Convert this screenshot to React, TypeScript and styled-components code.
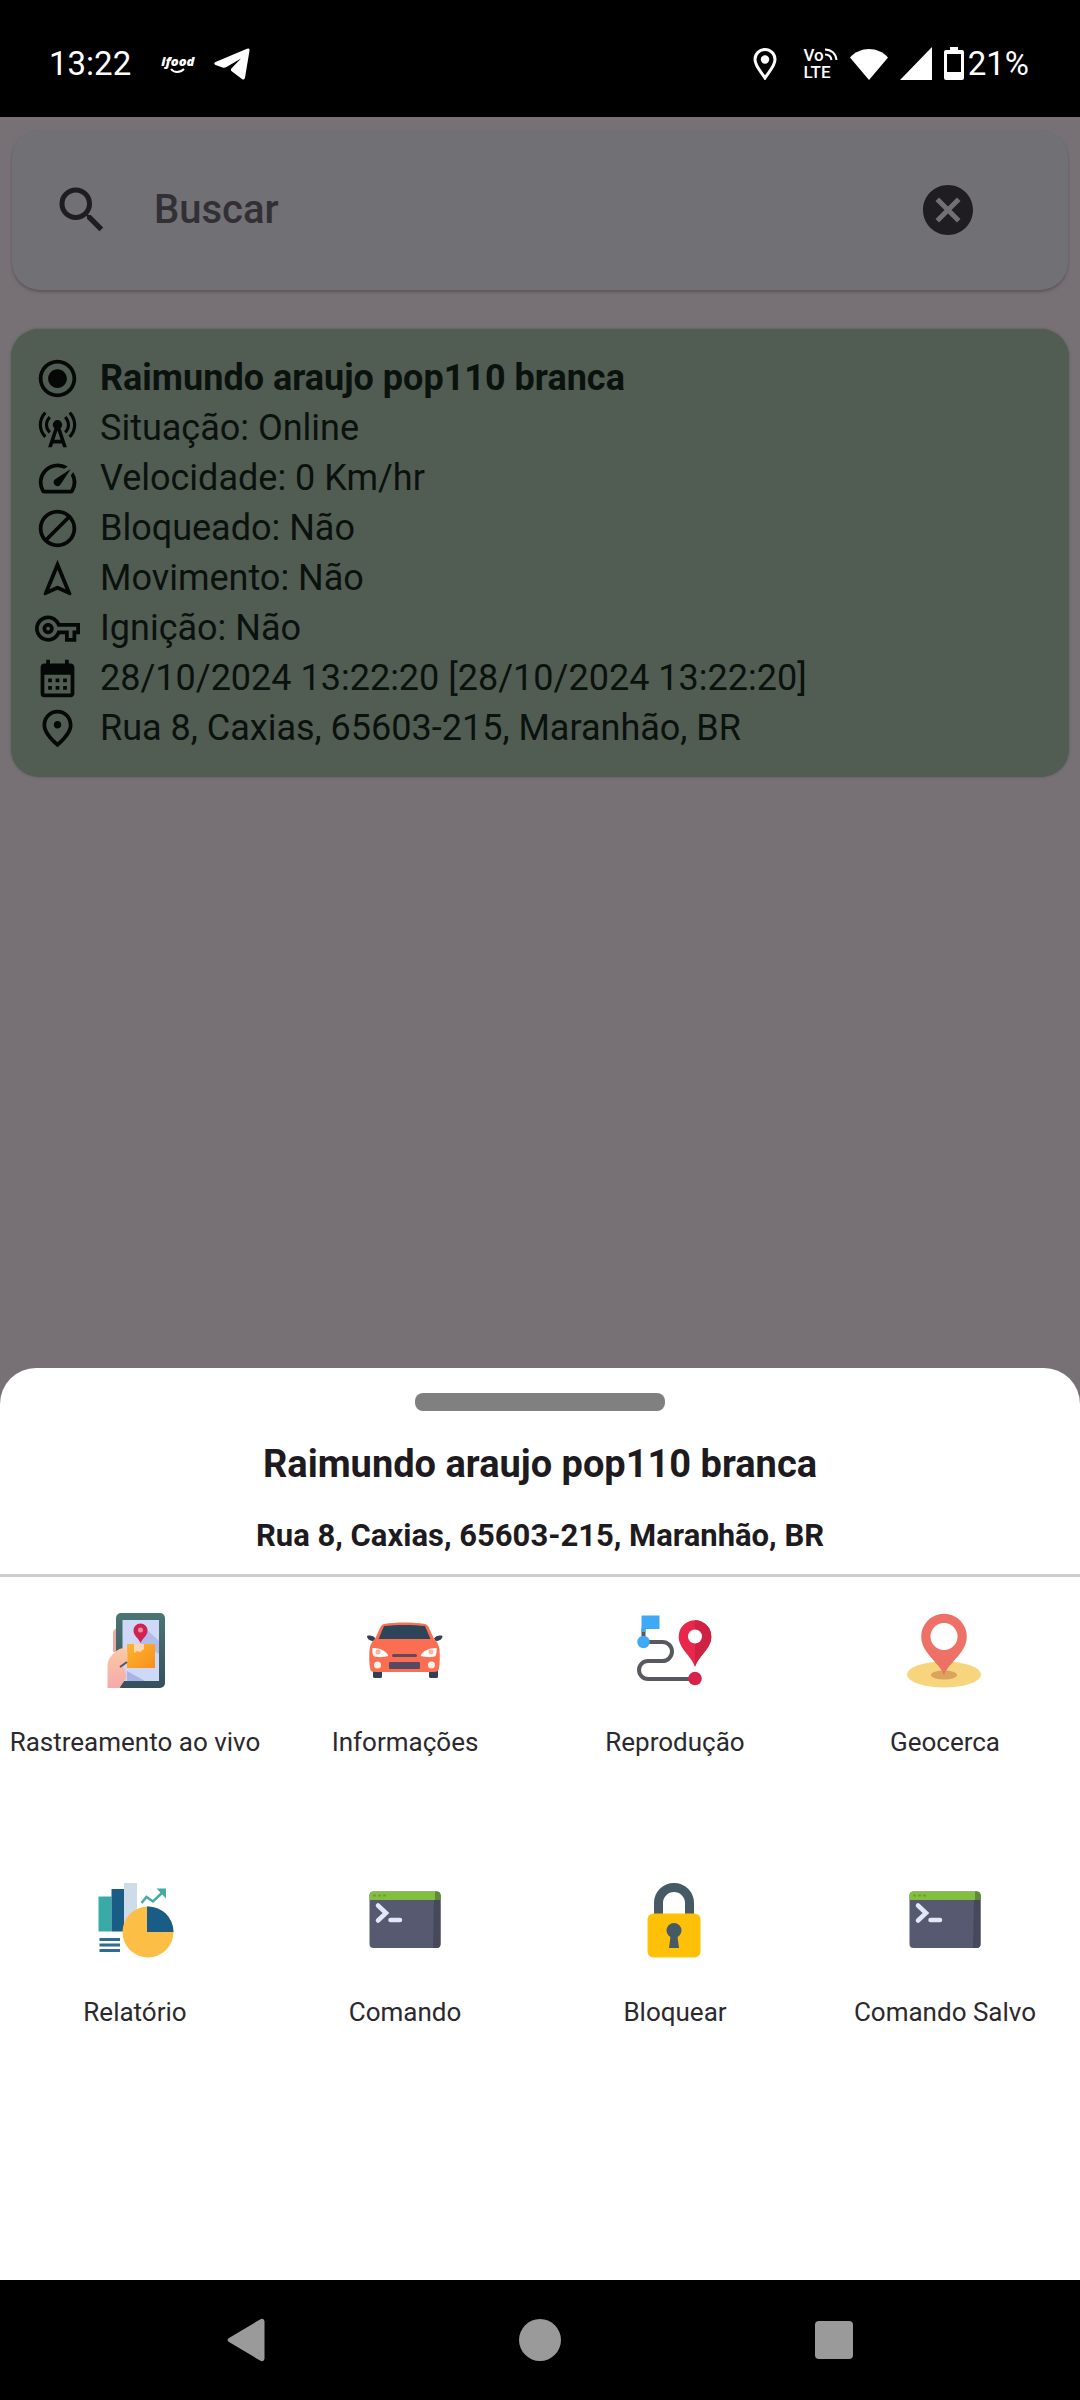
import React from 'react';
import styled, { createGlobalStyle } from 'styled-components';
import {
  MdBlock,
  MdCalendarMonth,
  MdCancel,
  MdCellTower,
  MdOutlineNavigation,
  MdOutlinePlace,
  MdOutlineVpnKey,
  MdRadioButtonChecked,
  MdSearch,
  MdSpeed,
} from 'react-icons/md';

const GlobalStyle = createGlobalStyle`
  *, *::before, *::after { box-sizing: border-box; }
  body {
    margin: 0;
    background: #000;
    font-family: Roboto, 'Noto Sans', sans-serif;
  }
  button, input { font: inherit; color: inherit; }
`;

const Screen = styled.div`
  display: flex;
  flex-direction: column;
  min-height: 100vh;
  background: #777175;
`;

/* ---------- status bar ---------- */

const StatusBar = styled.header`
  display: flex;
  align-items: center;
  justify-content: space-between;
  height: 117px;
  padding: 10px 51px 0 49px;
  background: #000;
  color: #fff;
  font-size: 33px;
  line-height: 40px;
`;

const StatusGroup = styled.div`
  display: flex;
  align-items: center;
`;

const Notifications = styled.div`
  display: flex;
  align-items: center;
  gap: 20px;
  margin-left: 30px;
`;

const SystemIcons = styled.div`
  display: flex;
  align-items: center;
  gap: 12px;
  margin-right: 4px;
`;

const FoodMark = styled.span`
  display: flex;
  flex-direction: column;
  align-items: center;
  font: italic 800 13px/14px 'Open Sans', sans-serif;
`;

const Volte = styled.span`
  display: grid;
  grid-template-columns: auto auto;
  justify-content: start;
  margin-left: 14px;
  font-size: 17px;
  font-weight: 500;
  line-height: 17px;
`;

const VolteBottom = styled.span`
  grid-column: 1 / -1;
`;

/* ---------- search ---------- */

const SearchCard = styled.form`
  display: flex;
  align-items: center;
  gap: 42px;
  height: 160px;
  margin: 13px 12px 0;
  padding: 0 60px 0 40px;
  border-radius: 28px;
  background: #717075;
  color: #1f1c22;
  box-shadow: 0 2px 3px rgba(70, 55, 62, 0.5);
`;

const SearchInput = styled.input`
  flex: 1;
  min-width: 0;
  padding: 0;
  border: 0;
  outline: 0;
  background: transparent;
  font-size: 40px;
  font-weight: 500;
  line-height: 60px;

  &::placeholder {
    color: #322f35;
    opacity: 1;
  }
`;

const ClearButton = styled.button`
  display: grid;
  place-items: center;
  width: 120px;
  height: 120px;
  padding: 0;
  border: 0;
  background: none;
`;

/* ---------- vehicle card ---------- */

const VehicleCard = styled.article`
  margin: 39px 11px 0;
  padding: 24px;
  border-radius: 28px;
  background: #515c53;
  color: #0b110d;
  box-shadow: 0 0 3px #515c53;
`;

const Facts = styled.ul`
  margin: 0;
  padding: 0;
  list-style: none;
`;

const Fact = styled.li<{ $strong?: boolean }>`
  display: flex;
  align-items: center;
  gap: 20px;
  font-size: 36px;
  line-height: 50px;
  font-weight: ${(p) => (p.$strong ? 700 : 400)};

  svg {
    flex: none;
    color: #050806;
  }
`;

/* ---------- bottom sheet ---------- */

const Sheet = styled.section`
  margin-top: auto;
  padding: 25px 0 163px;
  border-radius: 36px 36px 0 0;
  background: #fff;
  color: #1d1b20;
  text-align: center;
`;

const Handle = styled.div`
  width: 250px;
  height: 18px;
  margin: 0 auto;
  border-radius: 8px;
  background: #808080;
`;

const SheetTitle = styled.h2`
  margin: 28px 0 0;
  font-size: 38px;
  line-height: 50px;
  font-weight: 700;
`;

const SheetAddress = styled.p`
  margin: 26px 0 0;
  font-size: 31px;
  line-height: 42px;
  font-weight: 700;
`;

const Divider = styled.hr`
  height: 3px;
  margin: 17px 0 0;
  border: 0;
  background: #cdcdcd;
`;

const Actions = styled.div`
  display: grid;
  grid-template-columns: repeat(4, 1fr);
  grid-auto-rows: 270px;
`;

const Action = styled.button`
  display: flex;
  flex-direction: column;
  align-items: center;
  gap: 34px;
  padding: 36px 0 0;
  border: 0;
  background: none;
  font-size: 26px;
  line-height: 38px;
  white-space: nowrap;
  color: #2b292d;
`;

/* ---------- navigation bar ---------- */

const NavBar = styled.nav`
  display: flex;
  align-items: center;
  justify-content: center;
  gap: 174px;
  height: 120px;
  background: #000;
`;

const NavButton = styled.button`
  display: grid;
  place-items: center;
  width: 120px;
  height: 120px;
  padding: 0;
  border: 0;
  background: none;
  color: #9a9a9a;
`;

/* ---------- drawings ---------- */

const Art = ({ children }: { children: React.ReactNode }) => (
  <svg width="76" height="76" viewBox="0 0 76 76" overflow="visible" aria-hidden="true">
    {children}
  </svg>
);

const PhoneArt = () => (
  <Art>
    <defs>
      <linearGradient id="hand" x1="0" y1="0" x2="0" y2="1">
        <stop offset="0" stopColor="#fdc9a4" />
        <stop offset="1" stopColor="#f4a9ab" />
      </linearGradient>
      <linearGradient id="parcel" x1="0" y1="0" x2="1" y2="1">
        <stop offset="0" stopColor="#ffb52d" />
        <stop offset="1" stopColor="#f78f1e" />
      </linearGradient>
      <linearGradient id="frame" x1="0" y1="0" x2="0" y2="1">
        <stop offset="0" stopColor="#4a7674" />
        <stop offset="1" stopColor="#35505a" />
      </linearGradient>
    </defs>
    <path d="M20 15c-3 1-4 3-4 6v18h6V15z" fill="#f3a5a0" />
    <rect x="19" y="0" width="49" height="75" rx="5" fill="url(#frame)" />
    <rect x="25.500" y="7" width="36.500" height="61" fill="#cfd8f6" />
    <path d="M47 14l15 14v13L43 30z" fill="#b3bbea" />
    <path d="M30 58l18 10H30z" fill="#a9b3e8" />
    <rect x="30" y="31" width="28" height="24" fill="url(#parcel)" />
    <path d="M37 31h10v5l-4 3-3-1-3 2z" fill="#f6d7b8" />
    <path d="M43.500 30c-2-5-7-7-7-12.500a7 7 0 0 1 14 0c0 5.500-5 7.500-7 12.500z" fill="#cf2350" />
    <circle cx="43.500" cy="17" r="2.500" fill="#f08aa4" />
    <path d="M10.500 75V53c0-7 5-13 12-17 4-2 8 0 8 4v9l-4 5c3 5 4 11 0 15l-4 6z" fill="url(#hand)" />
    <path d="M23 54l7-5" stroke="#47596a" strokeWidth="2" />
  </Art>
);

const CarArt = () => (
  <Art>
    <path d="M6 57h9v6.500a1.500 1.500 0 0 1-1.500 1.500h-6A1.500 1.500 0 0 1 6 63.500zM62 57h9v6.500a1.500 1.500 0 0 1-1.500 1.500h-6a1.500 1.500 0 0 1-1.500-1.500z" fill="#2f4154" />
    <path d="M0 23c3-1 7 0 8.500 2.500L7 28c-4 0-7-2-7-5zM75.500 23c-3-1-7 0-8.500 2.500l1.500 2.500c4 0 7-2 7-5z" fill="#2f4154" />
    <path d="M17 11c12-2 29-2 41 0 2 .5 3 2 4 4l5 11c3 2 5 6 5.500 11 .6 6 .3 13-.5 18-.4 3-2 4-5 4H8c-3 0-4.600-1-5-4-.8-5-1-12-.5-18C3 32 5 28 8 26l5-11c1-2 2-3.500 4-4z" fill="#fb6e52" />
    <path d="M17 13c12-1.500 29-1.500 41 0l5.500 13h-52z" fill="#2c455b" />
    <path d="M5.500 35c8 0 14 3 16 8-6 1.500-12 1.500-15 0-1-2-1.500-5-1-8zM69.500 35c-8 0-14 3-16 8 6 1.500 12 1.500 15 0 1-2 1.500-5 1-8z" fill="#fff" />
    <circle cx="11" cy="39" r="2.500" fill="#fbb3a5" />
    <circle cx="64" cy="39" r="2.500" fill="#fbb3a5" />
    <rect x="25" y="41" width="25" height="3" rx="1.500" fill="#634a5b" />
    <rect x="22" y="49" width="31" height="7" rx="1" fill="#584a62" />
    <circle cx="10.500" cy="52" r="3.500" fill="#fff1e6" />
    <circle cx="64.500" cy="52" r="3.500" fill="#fff1e6" />
  </Art>
);

const RouteArt = () => (
  <Art>
    <path d="M6.500 15v14h19a9.500 9.500 0 0 1 0 19H11a9 9 0 0 0 0 18h47" fill="none" stroke="#57595f" strokeWidth="4" />
    <path d="M4.500 2.500h18v13.500h-14v3h-4z" fill="#3fa9f5" />
    <circle cx="6.500" cy="29" r="6.200" fill="#3fa9f5" />
    <path d="M58 54C54 42 41.700 36 41.700 23.500a16.300 16.300 0 0 1 32.600 0C74.300 36 62 42 58 54z" fill="#e8274b" />
    <path d="M58 7.200a16.300 16.300 0 0 1 16.300 16.300C74.300 36 62 42 58 54z" fill="#cf2144" />
    <circle cx="58" cy="23.500" r="7" fill="#fff" />
    <circle cx="58" cy="65.500" r="6.800" fill="#d9224a" />
  </Art>
);

const GeofenceArt = () => (
  <Art>
    <ellipse cx="37" cy="61.500" rx="37" ry="13" fill="#f6d57c" />
    <ellipse cx="37" cy="62" rx="13" ry="4.500" fill="#dba35c" />
    <path d="M37 62C32 49 14.200 40 14.200 23.500a22.800 22.800 0 0 1 45.600 0C59.800 40 42 49 37 62z" fill="#ee7168" />
    <circle cx="37" cy="23.500" r="13.500" fill="#fff" />
  </Art>
);

const ReportArt = () => (
  <Art>
    <path d="M1.500 13.500h13v35h-13z" fill="#38aaa5" />
    <path d="M14.500 6h12.500v42.500H14.500z" fill="#195c86" />
    <path d="M27 0h13v40H27z" fill="#cddce8" />
    <path d="M2.500 56.500h20.500M2.500 62h20.500M2.500 67.500h20.500" stroke="#2f6c93" strokeWidth="3" />
    <circle cx="51" cy="49" r="25.500" fill="#fcbe45" />
    <path d="M50 49V23.500a25.500 25.500 0 0 1 26.500 25.500z" fill="#195c86" />
    <path d="M44.500 20l5-6 6.500 4.500L67 8" fill="none" stroke="#45aca0" strokeWidth="2.500" />
    <path d="M59.500 5.500H69v10z" fill="#45aca0" />
  </Art>
);

const TerminalArt = () => (
  <Art>
    <rect x="2.500" y="8.500" width="71" height="56.500" rx="4" fill="#575970" />
    <path d="M67 12h6.500v49a4 4 0 0 1-4 4H66z" fill="#47485c" />
    <path d="M2.500 17v-4.500a4 4 0 0 1 4-4h63a4 4 0 0 1 4 4V17z" fill="#84be3f" />
    <path d="M68 8.500h1.500a4 4 0 0 1 4 4V17H68z" fill="#5f8a3a" />
    <path d="M6 12.500h14" stroke="#6d9f39" strokeWidth="2" strokeDasharray="3 2" />
    <path d="M11 22.500l8 7.500-8 7.500" fill="none" stroke="#e1e8f8" strokeWidth="4.500" strokeLinecap="round" />
    <path d="M23.500 37h9.500" stroke="#e1e8f8" strokeWidth="4.500" strokeLinecap="round" />
  </Art>
);

const PadlockArt = () => (
  <Art>
    <path d="M21.500 33V20a15.500 15.500 0 0 1 31 0v13" fill="none" stroke="#455a64" strokeWidth="9" />
    <rect x="10.500" y="30.500" width="53" height="44" rx="6" fill="#ffc107" />
    <circle cx="37" cy="47.500" r="7.500" fill="#455a64" />
    <path d="M34 50h6l2 15H32z" fill="#455a64" />
  </Art>
);

/* ---------- data ---------- */

const vehicle = {
  name: 'Raimundo araujo pop110 branca',
  address: 'Rua 8, Caxias, 65603-215, Maranhão, BR',
};

const facts = [
  { Icon: MdRadioButtonChecked, text: vehicle.name, strong: true },
  { Icon: MdCellTower, text: 'Situação: Online' },
  { Icon: MdSpeed, text: 'Velocidade: 0 Km/hr' },
  { Icon: MdBlock, text: 'Bloqueado: Não' },
  { Icon: MdOutlineNavigation, text: 'Movimento: Não' },
  { Icon: MdOutlineVpnKey, text: 'Ignição: Não' },
  { Icon: MdCalendarMonth, text: '28/10/2024 13:22:20 [28/10/2024 13:22:20]' },
  { Icon: MdOutlinePlace, text: vehicle.address },
];

const actions = [
  { Picture: PhoneArt, label: 'Rastreamento ao vivo' },
  { Picture: CarArt, label: 'Informações' },
  { Picture: RouteArt, label: 'Reprodução' },
  { Picture: GeofenceArt, label: 'Geocerca' },
  { Picture: ReportArt, label: 'Relatório' },
  { Picture: TerminalArt, label: 'Comando' },
  { Picture: PadlockArt, label: 'Bloquear' },
  { Picture: TerminalArt, label: 'Comando Salvo' },
];

export default function App() {
  return (
    <Screen>
      <GlobalStyle />
      <StatusBar>
        <StatusGroup>
          <time>13:22</time>
          <Notifications>
            <FoodMark>
              ifood
              <svg width="18" height="6" viewBox="0 0 18 6" aria-hidden="true">
                <path d="M2 1c3 4 9 4 13 0" fill="none" stroke="#fff" strokeWidth="2" />
              </svg>
            </FoodMark>
            <svg width="36" height="32" viewBox="0 0 36 32" role="img" aria-label="Telegram">
              <path d="M1.500 14L33 .8q3-1 2.500 2L31 29.500q-.5 3-3 1.500l-10-7.500q-2-1.500-.4-3.200L27 10.500 12.500 19q-2 1-4 .4L1.500 17q-2.500-1.500 0-3z" fill="#fff" />
            </svg>
          </Notifications>
        </StatusGroup>
        <StatusGroup>
          <SystemIcons>
            <svg width="24" height="32" viewBox="0 0 24 32" aria-hidden="true">
              <path d="M12 30C8 23.500 2 18 2 11.500a10 10 0 0 1 20 0C22 18 16 23.500 12 30z" fill="none" stroke="#fff" strokeWidth="3" />
              <circle cx="12" cy="11.500" r="4.200" fill="#fff" />
            </svg>
            <Volte>
              <span>Vo</span>
              <svg width="14" height="14" viewBox="0 0 14 14" aria-hidden="true">
                <path d="M1 2.500c6 0 11 4 11.500 10.500M1 7.500c3.500 0 6 2 6.500 5.500" fill="none" stroke="#fff" strokeWidth="2" />
              </svg>
              <VolteBottom>LTE</VolteBottom>
            </Volte>
            <svg width="38" height="32" viewBox="0 0 38 32" aria-hidden="true">
              <path d="M0 9.500C10-2 28-2 38 9.500L19 32z" fill="#fff" />
            </svg>
            <svg width="32" height="33" viewBox="0 0 32 33" aria-hidden="true">
              <path d="M32 0v33H0z" fill="#fff" />
            </svg>
            <svg width="20" height="33" viewBox="0 0 20 33" aria-hidden="true">
              <path d="M6 0h8v3h4q2 0 2 2v26q0 2-2 2H2q-2 0-2-2V5q0-2 2-2h4zM3 7v18h14V7z" fill="#fff" fillRule="evenodd" />
            </svg>
          </SystemIcons>
          <span>21%</span>
        </StatusGroup>
      </StatusBar>

      <SearchCard role="search" onSubmit={(e) => e.preventDefault()}>
        <MdSearch size={60} aria-hidden="true" />
        <SearchInput type="text" placeholder="Buscar" aria-label="Buscar" />
        <ClearButton type="reset" aria-label="Limpar busca">
          <MdCancel size={60} />
        </ClearButton>
      </SearchCard>

      <VehicleCard>
        <Facts>
          {facts.map(({ Icon, text, strong }) => (
            <Fact key={text} $strong={strong}>
              <Icon size={45} aria-hidden="true" />
              <span>{text}</span>
            </Fact>
          ))}
        </Facts>
      </VehicleCard>

      <Sheet aria-labelledby="sheet-title">
        <Handle />
        <SheetTitle id="sheet-title">{vehicle.name}</SheetTitle>
        <SheetAddress>{vehicle.address}</SheetAddress>
        <Divider />
        <Actions>
          {actions.map(({ Picture, label }) => (
            <Action key={label} type="button">
              <Picture />
              <span>{label}</span>
            </Action>
          ))}
        </Actions>
      </Sheet>

      <NavBar aria-label="Sistema">
        <NavButton type="button" aria-label="Voltar">
          <svg width="38" height="44" viewBox="0 0 38 44">
            <path d="M2 20L33 1.500q4-2 4.500 2v37q-.5 4-4.500 2L2 24q-3-2 0-4z" fill="currentColor" />
          </svg>
        </NavButton>
        <NavButton type="button" aria-label="Início">
          <svg width="42" height="42" viewBox="0 0 42 42">
            <circle cx="21" cy="21" r="21" fill="currentColor" />
          </svg>
        </NavButton>
        <NavButton type="button" aria-label="Recentes">
          <svg width="38" height="38" viewBox="0 0 38 38">
            <rect width="38" height="38" rx="4" fill="currentColor" />
          </svg>
        </NavButton>
      </NavBar>
    </Screen>
  );
}
